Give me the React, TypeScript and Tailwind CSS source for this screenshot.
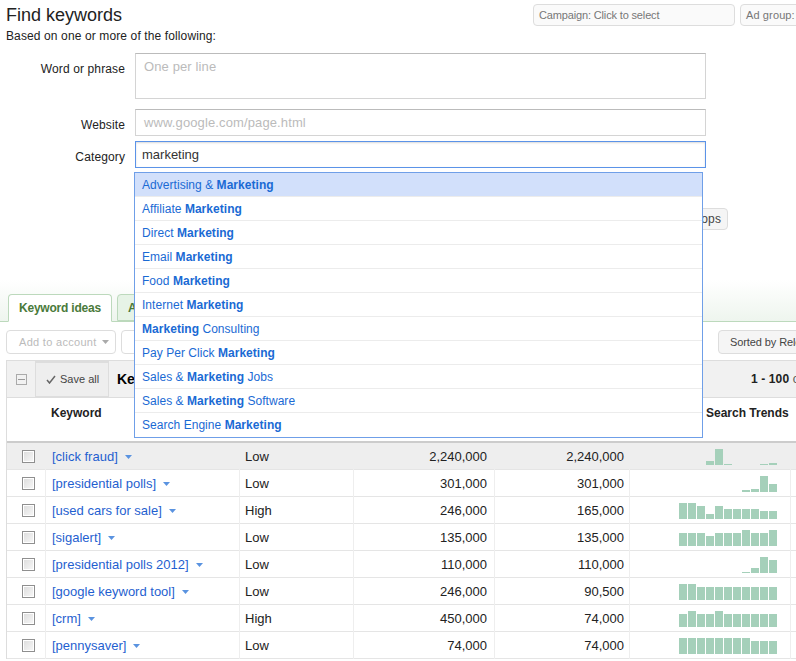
import React from 'react';

const categories: [string, string, string][] = [
  ['Advertising & ', 'Marketing', ''],
  ['Affiliate ', 'Marketing', ''],
  ['Direct ', 'Marketing', ''],
  ['Email ', 'Marketing', ''],
  ['Food ', 'Marketing', ''],
  ['Internet ', 'Marketing', ''],
  ['', 'Marketing', ' Consulting'],
  ['Pay Per Click ', 'Marketing', ''],
  ['Sales & ', 'Marketing', ' Jobs'],
  ['Sales & ', 'Marketing', ' Software'],
  ['Search Engine ', 'Marketing', ''],
];

const keywords = [
  { name: '[click fraud]', comp: 'Low', global: '2,240,000', local: '2,240,000', trend: [0, 0, 0, 4, 16, 1, 0, 0, 0, 1, 2] },
  { name: '[presidential polls]', comp: 'Low', global: '301,000', local: '301,000', trend: [0, 0, 0, 0, 0, 0, 0, 2, 3, 16, 8] },
  { name: '[used cars for sale]', comp: 'High', global: '246,000', local: '165,000', trend: [16, 16, 13, 5, 13, 10, 10, 10, 10, 8, 8] },
  { name: '[sigalert]', comp: 'Low', global: '135,000', local: '135,000', trend: [13, 13, 13, 10, 13, 13, 13, 16, 13, 13, 16] },
  { name: '[presidential polls 2012]', comp: 'Low', global: '110,000', local: '110,000', trend: [0, 0, 0, 0, 0, 0, 0, 1, 5, 16, 13] },
  { name: '[google keyword tool]', comp: 'Low', global: '246,000', local: '90,500', trend: [16, 16, 13, 13, 13, 13, 13, 13, 13, 13, 13] },
  { name: '[crm]', comp: 'High', global: '450,000', local: '74,000', trend: [13, 16, 13, 13, 16, 13, 13, 13, 13, 13, 13] },
  { name: '[pennysaver]', comp: 'Low', global: '74,000', local: '74,000', trend: [16, 16, 16, 16, 16, 16, 16, 16, 13, 13, 13] },
];

const Caret = ({ className }: { className: string }) => (
  <svg width="7" height="4" viewBox="0 0 7 4" className={className}>
    <path d="M0 0h7L3.5 4z" fill="currentColor" />
  </svg>
);

const Checkbox = () => (
  <span className="block w-[13px] h-[13px] border border-[#8f8f8f] bg-gradient-to-br from-[#dcdcdc] to-[#f8f8f8] shadow-[inset_0_0_0_1px_#fff]" />
);

const Trend = ({ bars }: { bars: number[] }) => (
  <div className="flex items-end gap-px h-4">
    {bars.map((h, i) => (
      <div key={i} className="w-2 bg-[#a5d0ba]" style={{ height: h }} />
    ))}
  </div>
);

const rowCols = 'grid grid-cols-[39px_194px_114px_141px_135px_161px_10px]';

export default function App() {
  return (
    <div className="w-[796px] h-[661px] overflow-hidden bg-white text-[#222] text-xs tracking-[0.12px] font-['Liberation_Sans',Arial,sans-serif]">
      {/* header */}
      <div className="flex justify-between pl-1.5 h-[53px]">
        <div>
          <h1 className="text-lg tracking-normal leading-[21px] pt-[5px]">Find keywords</h1>
          <p className="text-xs leading-[14px] pt-[3px]">Based on one or more of the following:</p>
        </div>
        <div className="flex gap-[5px] pt-1 shrink-0 -mr-[60px] text-[11px]">
          <div className="w-[202px] h-[22px] border border-[#ddd] rounded-sm bg-[#fafafa] px-[5px] leading-[20px] tracking-[-0.15px] text-[#777]">Campaign: Click to select</div>
          <div className="w-[116px] h-[22px] border border-[#ddd] rounded-sm bg-[#fafafa] px-[5px] leading-[20px] text-[#777]">Ad group: Click</div>
        </div>
      </div>

      {/* form */}
      <div className="flex flex-col">
        <div className="flex h-[46px]">
          <label className="w-[125px] text-right pt-[9px] leading-[14px]">Word or phrase</label>
          <div className="ml-2.5 w-[571px] border border-[#d4d4d4] border-t-[#bbb] pl-2 pt-[5px] text-[13px] leading-[16px] text-[#bbb]">One per line</div>
        </div>
        <div className="flex h-[27px] mt-2.5">
          <label className="w-[125px] text-right pt-[9px] leading-[14px]">Website</label>
          <div className="ml-2.5 w-[571px] border border-[#d4d4d4] border-t-[#bbb] pl-2 text-[13px] leading-[25px] text-[#bbb]">www.google.com/page.html</div>
        </div>
        <div className="flex h-[27px] mt-[5px]">
          <label className="w-[125px] text-right pt-[9px] leading-[14px]">Category</label>
          <div className="relative ml-2.5 w-[571px] border border-[#5b93e8] shadow-[inset_0_1px_2px_rgba(0,0,0,0.15)] pl-1.5 text-[13px] tracking-normal leading-[26px] text-[#333]">
            marketing
            <div className="absolute z-10 left-[-2px] top-[30px] w-[569px] border border-[#6f9fe8] bg-white text-xs tracking-[0.04px]">
              {categories.map(([before, bold, after], i) => (
                <div
                  key={i}
                  className={`h-6 pl-[7px] leading-[25px] border-b border-[#ececec] last:border-b-0 text-[#1a6ad4] ${i === 0 ? 'bg-[#d2e0fb]' : ''}`}
                >
                  {before}
                  <b>{bold}</b>
                  {after}
                </div>
              ))}
            </div>
          </div>
        </div>
      </div>

      {/* button behind the dropdown */}
      <div className="flex justify-end pr-[68px] mt-10">
        <div className="h-[22px] border border-[#ddd] rounded-sm bg-[#f5f5f5] px-1.5 leading-[20px] text-[#444]">Devices: Desktops and laptops</div>
      </div>

      {/* tabs */}
      <div className="h-[42px] mt-[50px] bg-gradient-to-b from-white to-[#eef5ee] border-b border-[#bcd9bc] pt-[14px] pl-2 flex gap-[5px]">
        <div className="w-[104px] h-[28px] border border-[#bcd9bc] border-b-white rounded-t-sm bg-white font-bold tracking-[-0.2px] text-[#4a7a3a] text-center leading-[26px]">Keyword ideas</div>
        <div className="w-[104px] h-[27px] border border-[#bcd9bc] rounded-t-sm bg-[#e6f3e6] font-bold tracking-[-0.2px] text-[#4a7a3a] pl-[10px] leading-[26px]">Ad group ideas</div>
      </div>

      {/* toolbar */}
      <div className="flex items-center pl-1.5 pt-2 text-[11px]">
        <div className="flex w-[110px] h-6 items-center border border-[#ddd] rounded-sm pl-3 tracking-[0.3px] text-[#bbb]">
          Add to account
          <Caret className="ml-[5px] text-[#aaa]" />
        </div>
        <div className="w-[100px] h-6 ml-[5px] border border-[#ddd] rounded-sm" />
        <div className="ml-auto w-[100px] -mr-[22px] h-6 border border-[#ddd] rounded-sm bg-[#f5f5f5] pl-[11px] leading-[22px] tracking-[-0.1px] whitespace-nowrap overflow-hidden text-[#444]">Sorted by Relevance</div>
      </div>

      {/* table */}
      <div className="mt-1.5 ml-1.5 w-[800px] border-t border-l border-[#ddd]">
        <div className="flex items-center h-[37px] bg-[#f1f1f1] border-b border-[#ddd]">
          <span className="block ml-[9px] w-[11px] h-[11px] relative border border-[#aaa]">
            <span className="absolute left-[1px] right-[1px] top-[4px] h-px bg-[#999]" />
          </span>
          <div className="ml-[8px] h-[37px] w-[74px] flex items-center pl-[10px] border-x border-y-2 border-[#ddd] bg-[#eee] text-[11px] tracking-normal text-[#444]">
            <svg width="10" height="9" viewBox="0 0 10 9" className="mr-[4px] text-[#666]">
              <path d="M1 5l2.5 3L9 1" fill="none" stroke="currentColor" strokeWidth="1.5" />
            </svg>
            Save all
          </div>
          <b className="ml-2 text-sm tracking-normal text-black">Keyword ideas</b>
          <div className="ml-auto w-[55px] whitespace-nowrap overflow-hidden text-[#555]">
            <b className="text-[#222]">1 - 100</b> of 800
          </div>
        </div>
        <div className={`${rowCols} h-[45px] border-b-2 border-[#ccc] font-bold tracking-normal leading-[14px]`}>
          <div />
          <div className="pt-2 pl-[5px]">Keyword</div>
          <div />
          <div />
          <div />
          <div className="pt-2 pl-[76px] whitespace-nowrap -mr-4">Search Trends</div>
        </div>
        {keywords.map((k, i) => (
          <div key={k.name} className={`${rowCols} h-[27px] border-b border-[#e5e5e5] text-[13px] tracking-normal leading-[27px] ${i === 0 ? 'bg-[#eee]' : ''}`}>
            <div className="flex items-center justify-center pl-[4px] border-r border-[#eee]">
              <Checkbox />
            </div>
            <div className="flex items-center gap-[7px] pl-[6px] border-r border-[#eee] text-[#1f5fd0]">
              {k.name}
              <Caret className="text-[#5a93e0]" />
            </div>
            <div className="pl-[5px] border-r border-[#eee]">{k.comp}</div>
            <div className="text-right pr-[7px] border-r border-[#eee]">{k.global}</div>
            <div className="text-right pr-[5px] border-r border-[#eee]">{k.local}</div>
            <div className="flex items-center pl-[49px] border-r border-[#eee]">
              <Trend bars={k.trend} />
            </div>
          </div>
        ))}
      </div>
    </div>
  );
}
